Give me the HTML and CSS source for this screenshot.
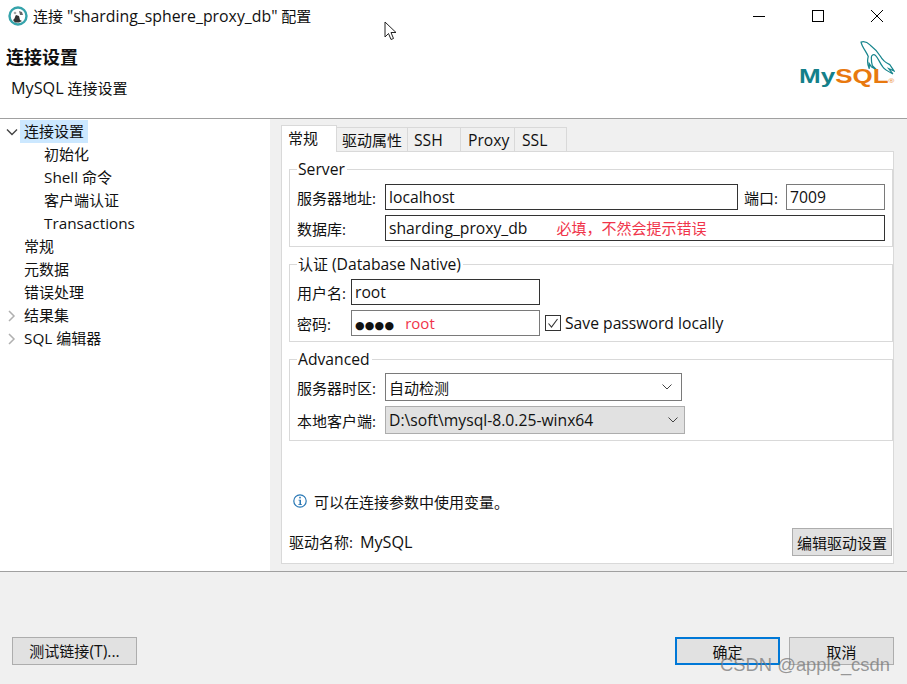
FILE: index.html
```html
<!DOCTYPE html>
<html lang="zh">
<head>
<meta charset="utf-8">
<title>连接配置</title>
<link rel="stylesheet" href="styles.css">
</head>
<body>
<div class="window">
  <div class="titlebar">
    <svg class="app-icon" width="20" height="20" viewBox="0 0 20 20"><circle cx="10" cy="10" r="8.500" fill="#fff" stroke="#35a3ab" stroke-width="2.400"/><path d="M5 14c2-1 2-4 3-5l3 1 1 4 2 1-3 1.500H7z" fill="#333"/><path d="M11 5l3 1 1 3-3 0z" fill="#666"/><circle cx="7" cy="7" r="1.300" fill="#aaa"/></svg>
    <span class="title">连接 <span class="lat wide-lat">"sharding_sphere_proxy_db"</span> 配置</span>
    <div class="controls">
      <svg width="14" height="14" viewBox="0 0 14 14"><path d="M1 7.500h12" stroke="#000" fill="none"/></svg>
      <svg width="14" height="14" viewBox="0 0 14 14"><rect x="1.500" y="1.500" width="11" height="11" stroke="#000" fill="none"/></svg>
      <svg width="14" height="14" viewBox="0 0 14 14"><path d="M1 1l12 12M13 1L1 13" stroke="#000" fill="none"/></svg>
    </div>
  </div>
  <header class="header">
    <div class="header-text">
      <h1>连接设置</h1>
      <p><span class="lat big">MySQL</span> 连接设置</p>
    </div>
    <div class="logo">
      <svg class="dolphin" width="35" height="37" viewBox="0 0 34 36"><path d="M1 2c3-1 6 0 9 3 4 3 7 6 10 11 2 4 5 6 9 8l4 6-5-2 4 5c-4-2-8-4-10-7-3-4-4-8-7-11-2-2-4 0-4 2 0 3 0 5 1 8l4 4-5-3-2-3 0 5c-2-4-2-8-1-12C6 11 2 7 1 2z" fill="#fff" stroke="#17858d" stroke-width="1.200"/></svg>
      <span class="wordmark"><span class="logo-my">My</span><span class="logo-sql">SQL</span><span class="logo-r">®</span></span>
    </div>
  </header>
  <div class="main">
    <nav class="tree">
      <div class="tree-row"><svg class="arrow" width="12" height="12" viewBox="0 0 12 12"><path d="M1 3.500L6 8.500l5-5" stroke="#444" stroke-width="1.400" fill="none"/></svg><span class="tree-label selected">连接设置</span></div>
      <div class="tree-row child">初始化</div>
      <div class="tree-row child"><span><span class="lat">Shell</span> 命令</span></div>
      <div class="tree-row child">客户端认证</div>
      <div class="tree-row child"><span class="lat">Transactions</span></div>
      <div class="tree-row"><span class="arrow-space"></span><span class="tree-label">常规</span></div>
      <div class="tree-row"><span class="arrow-space"></span><span class="tree-label">元数据</span></div>
      <div class="tree-row"><span class="arrow-space"></span><span class="tree-label">错误处理</span></div>
      <div class="tree-row"><svg class="arrow" width="12" height="12" viewBox="0 0 12 12"><path d="M3 1l5 5-5 5" stroke="#b0b0b0" stroke-width="1.500" fill="none"/></svg><span class="tree-label">结果集</span></div>
      <div class="tree-row"><svg class="arrow" width="12" height="12" viewBox="0 0 12 12"><path d="M3 1l5 5-5 5" stroke="#b0b0b0" stroke-width="1.500" fill="none"/></svg><span class="tree-label"><span class="lat">SQL</span> 编辑器</span></div>
    </nav>
    <section class="panel">
      <div class="tabs">
        <div class="tab active">常规</div>
        <div class="tab t2">驱动属性</div>
        <div class="tab t3 lat">SSH</div>
        <div class="tab t4 lat">Proxy</div>
        <div class="tab t5 lat">SSL</div>
      </div>
      <div class="page">
        <fieldset class="group g1">
          <legend class="lat">Server</legend>
          <div class="row">
            <label class="lab-wide">服务器地址:</label>
            <div class="input host lat">localhost</div>
            <label class="lab-port">端口:</label>
            <div class="input port lat">7009</div>
          </div>
          <div class="row">
            <label class="lab-wide">数据库:</label>
            <div class="input grow"><span class="lat">sharding_proxy_db</span><span class="note db-note">必填，不然会提示错误</span></div>
          </div>
        </fieldset>
        <fieldset class="group g2">
          <legend>认证 <span class="lat">(Database Native)</span></legend>
          <div class="row">
            <label class="lab-narrow">用户名:</label>
            <div class="input user lat">root</div>
          </div>
          <div class="row">
            <label class="lab-narrow">密码:</label>
            <div class="input user soft"><span class="dots">●●●●</span><span class="note pw-note">root</span></div>
            <span class="check"><svg width="12" height="12" viewBox="0 0 12 12"><path d="M1.500 6.500L4.500 10 10.500 2" stroke="#333" stroke-width="1.100" fill="none"/></svg></span>
            <span class="check-label lat">Save password locally</span>
          </div>
        </fieldset>
        <fieldset class="group g3">
          <legend class="lat">Advanced</legend>
          <div class="row">
            <label class="lab-wide">服务器时区:</label>
            <div class="select tz"><span>自动检测</span><svg width="10" height="6" viewBox="0 0 10 6"><path d="M.500 .500L5 5 9.500 .500" stroke="#444" fill="none"/></svg></div>
          </div>
          <div class="row">
            <label class="lab-wide">本地客户端:</label>
            <div class="select client"><span class="lat">D:\soft\mysql-8.0.25-winx64</span><svg width="10" height="6" viewBox="0 0 10 6"><path d="M.500 .500L5 5 9.500 .500" stroke="#444" fill="none"/></svg></div>
          </div>
        </fieldset>
        <div class="info">
          <svg width="14" height="14" viewBox="0 0 14 14"><circle cx="7" cy="7" r="6.200" fill="#fff" stroke="#2a78b5" stroke-width="1.200"/><rect x="6.200" y="2.800" width="1.600" height="1.600" fill="#2a78b5"/><path d="M5.500 5.800H8V10.300H9V11H5.300V10.300H6.500V6.500H5.500z" fill="#2a78b5"/></svg>
          <span>可以在连接参数中使用变量。</span>
        </div>
        <div class="driver">
          <span class="driver-name">驱动名称:<span class="driver-value lat big">MySQL</span></span>
          <button class="btn edit">编辑驱动设置</button>
        </div>
      </div>
    </section>
  </div>
  <footer class="footer">
    <button class="btn wide">测试链接<span class="lat">(T)...</span></button>
    <div class="footer-right">
      <button class="btn wide2 primary">确定</button>
      <button class="btn wide2">取消</button>
    </div>
  </footer>
  <svg class="cursor" width="16" height="22" viewBox="0 0 16 22"><path d="M1 1v15l3.500-3.500 2.500 6 2.500-1-2.500-6h5z" fill="#fff" stroke="#222" stroke-width="1"/></svg>
  <div class="watermark">CSDN @apple_csdn</div>
</div>
</body>
</html>
```
FILE: styles.css
```css
* { box-sizing: border-box; }
html, body { margin: 0; padding: 0; }
body {
  width: 907px;
  height: 684px;
  overflow: hidden;
  background: #fff;
  color: #111;
  font-family: "Open Sans", "Noto Sans", "Noto Sans CJK SC", sans-serif;
  font-size: 15px;
}
.window { position: relative; width: 907px; height: 684px; display: flex; flex-direction: column; }
.lat { font-size: 15.7px; }
.lat.big { font-size: 16.2px; }
.lat.wide-lat { font-size: 15.85px; }
.tree .lat { font-size: 15.3px; }

.titlebar { height: 34px; display: flex; align-items: center; padding: 0 0 3px 8px; flex: none; }
.app-icon { margin-right: 5px; }
.title { font-size: 15px; }
.controls { margin-left: auto; display: flex; gap: 45px; padding-right: 23px; margin-top: 1px; }

.header { height: 85px; flex: none; display: flex; justify-content: space-between; border-bottom: 1px solid #a0a0a0; }
.header-text { padding-left: 6px; }
.header h1 { margin: 9px 0 0; font-size: 18px; line-height: 28px; font-weight: 700; }
.header p { margin: 5px 0 0 5px; font-size: 15px; line-height: 24px; }
.logo { position: relative; width: 108px; padding-top: 29px; white-space: nowrap; font-family: "Liberation Sans", sans-serif; font-weight: 700; font-size: 20px; line-height: 26px; }
.wordmark { display: inline-block; transform: scaleX(1.3); transform-origin: left center; }
.dolphin { position: absolute; left: 61px; top: 6px; }
.logo-my { color: #14808a; }
.logo-sql { color: #e8790f; }
.logo-r { color: #e8790f; font-size: 6px; font-weight: 400; }

.main { height: 452px; flex: none; display: flex; }
.tree { width: 270px; flex: none; padding: 1px 0 0 6px; }
.tree-row { height: 23px; line-height: 23px; display: flex; align-items: center; white-space: nowrap; }
.tree-row.child { padding-left: 38px; }
.arrow { flex: none; margin-right: 2px; }
.arrow-space { width: 14px; flex: none; }
.tree-label { padding: 0 4px; height: 23px; }
.selected { background: #cce8ff; }

.panel { flex: 1; background: #f0f0f0; padding: 6px 15px 7px 11px; display: flex; flex-direction: column; }
.tabs { display: flex; align-items: flex-end; height: 27px; flex: none; position: relative; z-index: 1; }
.tab { height: 25px; line-height: 25px; border: 1px solid #d9d9d9; border-left: 0; border-bottom: 0; padding-left: 5px; white-space: nowrap; }
.tab.active { height: 27px; width: 56px; background: #fff; border-left: 1px solid #d9d9d9; padding-left: 6px; line-height: 25px; }
.t2 { width: 71px; padding-left: 5px; }
.t3 { width: 53px; padding-left: 6px; }
.t4 { width: 54px; padding-left: 7px; }
.t5 { width: 52px; padding-left: 7px; }
.page { flex: 1; background: #fff; border: 1px solid #d9d9d9; margin-top: -1px; padding: 7px 0 0 7px; display: flex; flex-direction: column; }

.group { margin: 0; padding: 5px 6px 5px 7px; width: 604px; border: 1px solid #d9d9d9; display: flex; flex-direction: column; gap: 5px; min-width: 0; }
.group legend { padding: 0 2px 0 1px; margin-left: 0; line-height: 20px; }
.g1 { height: 88px; }
.g2 { height: 88px; margin-top: 7px; }
.g3 { height: 92px; margin-top: 7px; padding: 4px 0 5px 7px; }
.row { display: flex; align-items: center; white-space: nowrap; }
.g2 .row, .g1 .row { height: 26px; }
.lab-wide { width: 88px; flex: none; }
.lab-narrow { width: 54px; flex: none; }
.lab-port { width: 48px; flex: none; padding-left: 6px; }
.input { height: 26px; line-height: 24px; border: 1px solid #333; padding: 0 3px; }
.input.soft, .input.port { border-color: #7a7a7a; }
.host { width: 353px; flex: none; }
.port { width: 99px; flex: none; }
.grow { width: 500px; flex: none; }
.user { width: 189px; flex: none; }
.note { color: #f0344a; font-size: 15px; }
.db-note { margin-left: 29px; }
.pw-note { margin-left: 11px; }
.dots { font-size: 11px; letter-spacing: 0.2px; font-family: "DejaVu Sans", sans-serif; }
.check { width: 16px; height: 16px; border: 1px solid #333; margin-left: 5px; display: flex; align-items: center; justify-content: center; flex: none; }
.check-label { margin-left: 4px; }
.select { height: 28px; display: flex; align-items: center; justify-content: space-between; padding: 0 9px 0 3px; flex: none; }
.tz { width: 297px; border: 1px solid #7a7a7a; background: #fff; }
.client { width: 300px; border: 1px solid #adadad; background: #e1e1e1; padding-right: 6px; }

.info { margin: 50px 0 0 4px; display: flex; align-items: center; gap: 7px; height: 20px; }
.driver { display: flex; justify-content: space-between; align-items: center; margin-top: 17px; width: 603px; }
.driver-value { margin-left: 7px; }
.btn { font: inherit; color: #111; background: #e1e1e1; border: 1px solid #adadad; padding: 0; height: 28px; border-radius: 0; }
.edit { width: 100px; }

.footer { height: 113px; flex: none; background: #f0f0f0; border-top: 1px solid #a0a0a0; display: flex; justify-content: space-between; padding: 65px 13px 0 12px; position: relative; }
.footer .btn { height: 28px; }
.wide { width: 125px; }
.wide2 { width: 105px; }
.footer-right { display: flex; gap: 9px; }
.primary { border: 2px solid #0078d7; }

.cursor { position: absolute; left: 384px; top: 21px; }
.watermark { position: absolute; left: 720px; top: 654px; font-size: 18.4px; color: rgba(120,120,120,.75); font-family: "Liberation Sans", sans-serif; }
```
